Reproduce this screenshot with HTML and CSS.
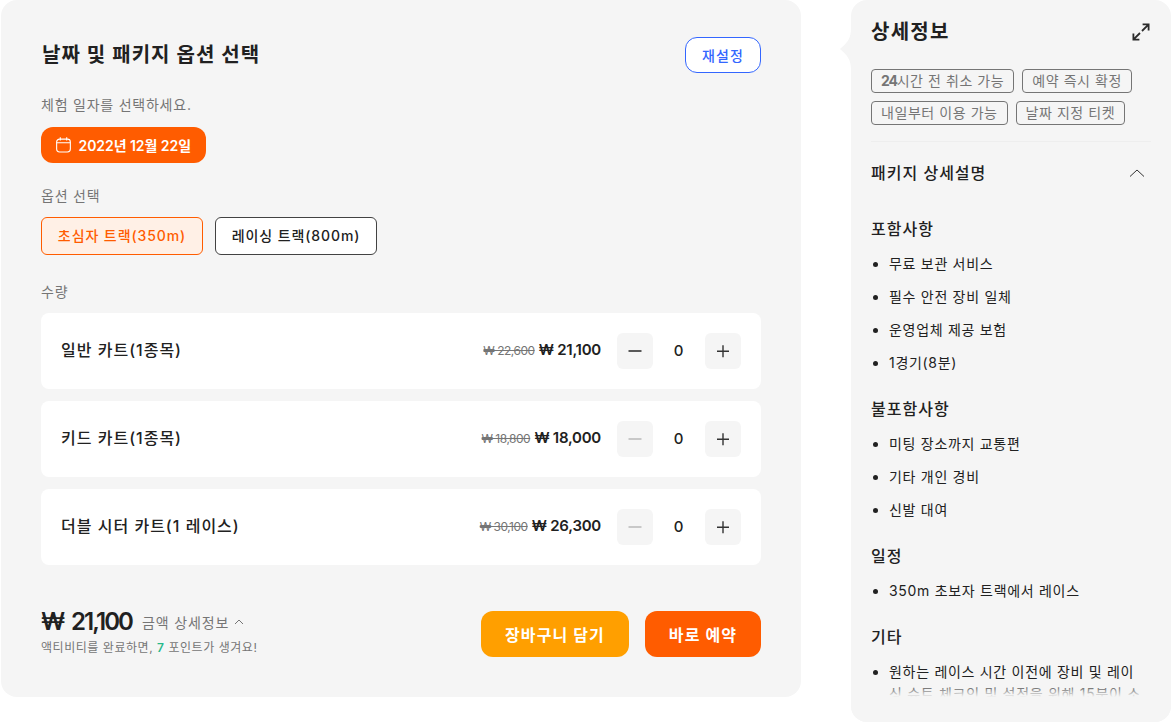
FILE: index.html
```html
<!DOCTYPE html>
<html lang="ko">
<head>
<meta charset="utf-8">
<title>패키지 옵션 선택</title>
<link rel="stylesheet" href="styles.css">
</head>
<body>
<div class="page">
  <main class="options">
    <div class="options-head">
      <h1>날짜 및 패키지 옵션 선택</h1>
      <button class="reset">재설정</button>
    </div>
    <p class="label label-date">체험 일자를 선택하세요.</p>
    <button class="date">
      <svg width="18" height="18" viewBox="0 0 18 18" fill="none" stroke="#fff" stroke-width="1.2"><rect x="0.7" y="2.6" width="15" height="14" rx="3.2"/><path d="M0.7 6.6h15M4.7 0.6v3.6M11.7 0.6v3.6"/></svg>
      <span>2022년 12월 22일</span>
    </button>
    <p class="label label-option">옵션 선택</p>
    <div class="choices">
      <button class="choice active">초심자 트랙(350m)</button>
      <button class="choice">레이싱 트랙(800m)</button>
    </div>
    <p class="label label-qty">수량</p>
    <div class="rows">
      <div class="row">
        <span class="name">일반 카트(1종목)</span>
        <span class="prices"><s>₩ 22,600</s> <b>₩ 21,100</b></span>
        <div class="stepper">
          <button class="step"><svg width="20" height="20" viewBox="0 0 20 20" stroke="#333" stroke-width="1.6"><path d="M3.5 10h13"/></svg></button>
          <span class="count">0</span>
          <button class="step"><svg width="20" height="20" viewBox="0 0 20 20" stroke="#333" stroke-width="1.4"><path d="M4 10.3h12M10 4.3v12"/></svg></button>
        </div>
      </div>
      <div class="row">
        <span class="name">키드 카트(1종목)</span>
        <span class="prices"><s>₩ 18,800</s> <b>₩ 18,000</b></span>
        <div class="stepper">
          <button class="step"><svg width="20" height="20" viewBox="0 0 20 20" stroke="#bdbdbd" stroke-width="1.6"><path d="M3.5 10h13"/></svg></button>
          <span class="count">0</span>
          <button class="step"><svg width="20" height="20" viewBox="0 0 20 20" stroke="#333" stroke-width="1.4"><path d="M4 10.3h12M10 4.3v12"/></svg></button>
        </div>
      </div>
      <div class="row">
        <span class="name">더블 시터 카트(1 레이스)</span>
        <span class="prices"><s>₩ 30,100</s> <b>₩ 26,300</b></span>
        <div class="stepper">
          <button class="step"><svg width="20" height="20" viewBox="0 0 20 20" stroke="#bdbdbd" stroke-width="1.6"><path d="M3.5 10h13"/></svg></button>
          <span class="count">0</span>
          <button class="step"><svg width="20" height="20" viewBox="0 0 20 20" stroke="#333" stroke-width="1.4"><path d="M4 10.3h12M10 4.3v12"/></svg></button>
        </div>
      </div>
    </div>
    <div class="footer">
      <div class="summary">
        <div class="total">
          <strong>₩ 21,100</strong>
          <span class="detail">금액 상세정보</span>
          <svg width="10" height="6" viewBox="0 0 10 6" fill="none" stroke="#757575" stroke-width="1"><path d="M1 5l4-4 4 4"/></svg>
        </div>
        <p class="points">액티비티를 완료하면, <em>7</em> 포인트가 생겨요!</p>
      </div>
      <div class="actions">
        <button class="cta cart">장바구니 담기</button>
        <button class="cta book">바로 예약</button>
      </div>
    </div>
  </main>

  <aside class="info">
    <span class="notch"></span>
    <div class="info-head">
      <h2>상세정보</h2>
      <svg width="18" height="18" viewBox="0 0 18 18" fill="none" stroke="#2b2b2b" stroke-width="1.8"><path d="M10 8L16.4 1.6M10.6 1.4h6v6M8 10L1.6 16.4M1.4 10.6v6h6"/></svg>
    </div>
    <div class="tags">
      <span class="tag"><b>24</b>시간 전 취소 가능</span>
      <span class="tag">예약 즉시 확정</span>
      <span class="tag">내일부터 이용 가능</span>
      <span class="tag">날짜 지정 티켓</span>
    </div>
    <div class="section-head">
      <h3>패키지 상세설명</h3>
      <svg width="16" height="8" viewBox="0 0 16 8" fill="none" stroke="#333" stroke-width="1"><path d="M1 7.5L8 1l7 6.5"/></svg>
    </div>
    <h4 class="first">포함사항</h4>
    <ul>
      <li>무료 보관 서비스</li>
      <li>필수 안전 장비 일체</li>
      <li>운영업체 제공 보험</li>
      <li>1경기(8분)</li>
    </ul>
    <h4>불포함사항</h4>
    <ul>
      <li>미팅 장소까지 교통편</li>
      <li>기타 개인 경비</li>
      <li>신발 대여</li>
    </ul>
    <h4>일정</h4>
    <ul>
      <li>350m 초보자 트랙에서 레이스</li>
    </ul>
    <h4>기타</h4>
    <ul class="wrap">
      <li>원하는 레이스 시간 이전에 장비 및 레이싱 슈트 체크인 및 설정을 위해 15분이 소요됩니다</li>
    </ul>
    <div class="fade"></div>
  </aside>
</div>
</body>
</html>
```
FILE: styles.css
```css
* { box-sizing: border-box; }
html, body { margin: 0; height: 100%; overflow: hidden; background: #fff; }
body { font-family: Inter, "Noto Sans CJK KR", sans-serif; color: #212121; }
button { font: inherit; cursor: pointer; border: 0; }
h1, h2, h3, h4, p, ul { margin: 0; padding: 0; }

.page { display: flex; align-items: flex-start; gap: 50px; padding-left: 1px; height: 722px; }

.options { width: 800px; height: 697px; flex: none; background: #f5f5f5; border-radius: 16px; padding: 37px 40px 0; }
.options-head { display: flex; justify-content: space-between; align-items: center; height: 36px; }
h1 { font-size: 20px; line-height: 36px; font-weight: 600; letter-spacing: 0.05em; padding-left: 1px; }
.reset { width: 76px; height: 36px; background: #fff; color: #3366ff; border: 1px solid #3366ff; border-radius: 12px; font-size: 14px; font-weight: 500; letter-spacing: 0.08em; }

.label { font-size: 14px; line-height: 20px; color: #757575; letter-spacing: 0.055em; }
.label-date { margin-top: 22px; }
.date { display: flex; align-items: center; gap: 6px; margin-top: 12px; height: 36px; width: 165px; padding: 0 15px; background: #ff5c00; color: #fff; border-radius: 12px; font-size: 14px; font-weight: 600; letter-spacing: -0.05px; }
.date span { white-space: nowrap; }
.label-option { margin-top: 23px; }
.choices { display: flex; gap: 12px; margin-top: 11px; }
.choice { height: 38px; width: 162px; background: #fff; border: 1px solid #424242; border-radius: 6px; font-size: 14px; font-weight: 500; color: #212121; white-space: nowrap; padding: 0 0 2px; letter-spacing: 0.065em; }
.choice.active { color: #ff5c00; background: #fff0e6; border-color: #ff5c00; }
.label-qty { margin-top: 27px; }

.rows { display: flex; flex-direction: column; gap: 12px; margin-top: 11px; }
.row { display: flex; align-items: center; height: 76px; padding: 0 20px; background: #fff; border-radius: 8px; }
.name { font-size: 16px; font-weight: 500; flex: 1; letter-spacing: 0.0625em; padding-bottom: 4px; }
.prices { font-size: 15px; margin-right: 16px; white-space: nowrap; padding-bottom: 4px; }
.prices s { font-size: 12px; color: #757575; letter-spacing: -0.5px; }
.prices b { font-weight: 600; letter-spacing: -0.25px; }
.stepper { display: flex; align-items: center; }
.step { width: 36px; height: 36px; background: #f5f5f5; border-radius: 6px; display: flex; align-items: center; justify-content: center; padding: 0; }
.count { width: 52px; text-align: center; font-size: 15px; font-weight: 500; padding: 0 1px 2px 0; }

.footer { display: flex; justify-content: space-between; margin-top: 46px; }
.total { display: flex; align-items: center; height: 20px; white-space: nowrap; }
.total strong { font-size: 24px; font-weight: 600; letter-spacing: -1.9px; word-spacing: 3.5px; }
.detail { font-size: 14px; color: #757575; margin: 2px 5px 0 10px; letter-spacing: 0.06em; }
.total svg { margin-top: 2px; }
.points { font-size: 12px; line-height: 18px; color: #757575; margin-top: 8px; letter-spacing: 0.045em; }
.points em { font-style: normal; font-weight: 600; color: #26b88a; }
.actions { display: flex; gap: 16px; }
.cta { height: 46px; border-radius: 12px; color: #fff; font-size: 16px; font-weight: 700; letter-spacing: 0.07em; padding: 0; }
.cart { width: 148px; background: #ff9f00; }
.book { width: 116px; background: #ff5c00; }

.info { position: relative; width: 320px; height: 722px; flex: none; background: #f5f5f5; border-radius: 16px; padding: 20px; }
.notch { position: absolute; left: -11px; top: 28px; width: 11px; height: 42px; background: #f5f5f5; clip-path: path("M11 0C11 10 8 14 0 21C8 28 11 32 11 42Z"); }
.info-head { display: flex; justify-content: space-between; align-items: center; height: 24px; padding-right: 1px; }
h2 { font-size: 20px; font-weight: 600; line-height: 24px; letter-spacing: 0.0625em; }
.tags { display: flex; flex-wrap: wrap; gap: 8px; margin-top: 25px; padding-bottom: 16px; border-bottom: 1px solid #eeeeee; width: 280px; }
.tag { height: 24px; padding: 0 9px; border: 1px solid #757575; border-radius: 4px; color: #757575; font-size: 14px; line-height: 22px; white-space: nowrap; letter-spacing: 0.04em; }
.tag b { font-weight: 700; letter-spacing: -1.2px; }
.section-head { display: flex; justify-content: space-between; align-items: center; height: 24px; margin-top: 19px; padding-right: 6px; }
h3 { font-size: 16px; font-weight: 500; line-height: 24px; letter-spacing: 0.0625em; }
h4 { font-size: 16px; font-weight: 500; line-height: 24px; margin-top: 23px; letter-spacing: 0.0625em; }
h4.first { margin-top: 32px; }
ul { margin-top: 12px; padding-left: 18px; list-style: disc; }
ul.wrap { padding-right: 10px; }
li { font-size: 14px; line-height: 22px; margin-bottom: 11px; color: #212121; letter-spacing: 0.05em; }
.fade { position: absolute; left: 0; right: 0; top: 682px; height: 40px; background: linear-gradient(to bottom, rgba(245,245,245,0) 0, #f5f5f5 15px); border-radius: 0 0 16px 16px; }
```
